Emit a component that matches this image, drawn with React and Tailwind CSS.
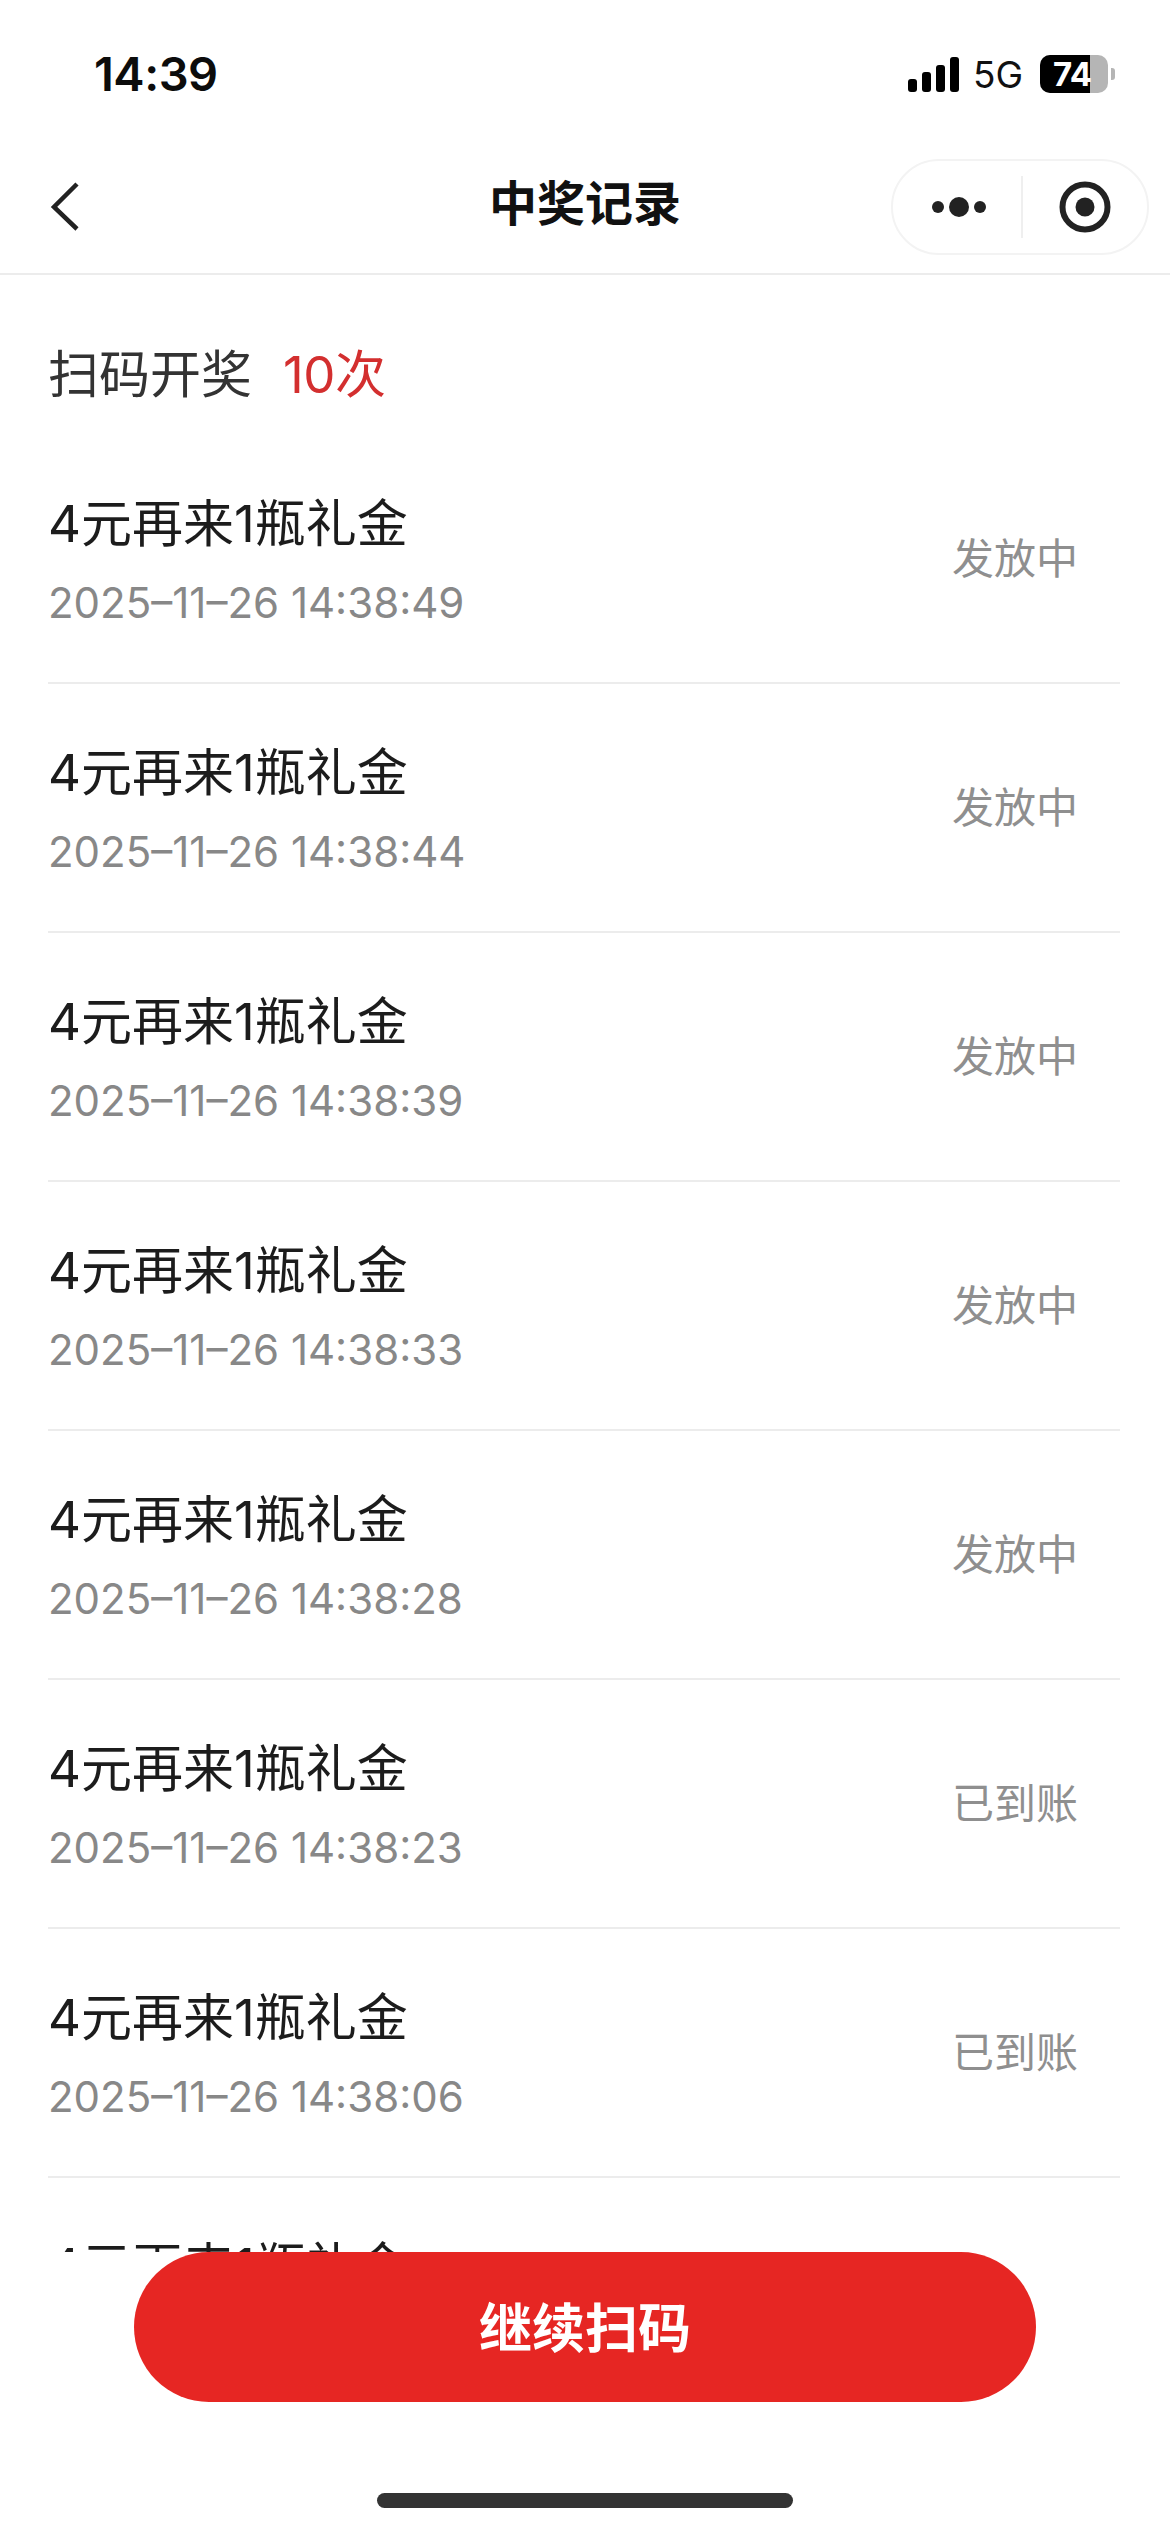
const FONT = { fontFamily: '"Inter","Noto Sans CJK SC",sans-serif' };

const rows = [
  ["2025–11–26 14:38:49", "发放中"],
  ["2025–11–26 14:38:44", "发放中"],
  ["2025–11–26 14:38:39", "发放中"],
  ["2025–11–26 14:38:33", "发放中"],
  ["2025–11–26 14:38:28", "发放中"],
  ["2025–11–26 14:38:23", "已到账"],
  ["2025–11–26 14:38:06", "已到账"],
];

function Signal() {
  return (
    <div className="flex items-end gap-[5px]">
      <div className="h-[13px] w-[9px] rounded-[3px] bg-black" />
      <div className="h-[20px] w-[9px] rounded-[3px] bg-black" />
      <div className="h-[27px] w-[9px] rounded-[3px] bg-black" />
      <div className="h-[35px] w-[9px] rounded-[3px] bg-black" />
    </div>
  );
}

function Battery() {
  return (
    <div className="flex items-center gap-[3px]">
      <div className="relative flex h-[38px] w-[68px] items-center overflow-hidden rounded-[10px] bg-[#b5b5b5]">
        <div className="absolute inset-y-0 left-0 w-[50px] bg-black" />
        <span className="relative ml-[13px] text-[33px] font-bold leading-none tracking-[-0.5px] text-white">74</span>
      </div>
      <div className="h-[12px] w-[4px] rounded-r-[3px] bg-[#b5b5b5]" />
    </div>
  );
}

function Row({ date, status }) {
  return (
    <div className="flex h-[249px] shrink-0 items-center justify-between border-b-2 border-[#ececec]">
      <div className="self-start pt-[54px]">
        <div className="h-[70px] text-[51px] font-normal leading-[70px] text-[#1c1c1c]">4元再来1瓶礼金</div>
        {date && (
          <div className="mt-[14px] h-[60px] text-[42px] font-normal leading-[60px] text-[#888888]">{date}</div>
        )}
      </div>
      {status && <div className="mr-[42px] text-[42px] font-normal leading-none text-[#8f8f8f]">{status}</div>}
    </div>
  );
}

export default function App() {
  return (
    <div className="relative h-[2532px] w-[1170px] overflow-hidden bg-white" style={FONT}>
      <div className="flex h-[130px] items-start justify-between pl-[94px] pr-[55px] pt-[48px]">
        <div className="text-[47px] font-semibold leading-[52px] tracking-[-0.5px] text-[#0c0c0c]">14:39</div>
        <div className="flex h-[52px] items-center">
          <Signal />
          <span className="ml-[14px] text-[37px] leading-none text-[#111111]">5G</span>
          <div className="ml-[17px]"><Battery /></div>
        </div>
      </div>

      <div className="relative flex h-[145px] items-center justify-center border-b-2 border-[#ececec]">
        <svg className="absolute left-[48px] top-[50px]" width="34" height="52" viewBox="0 0 34 52" fill="none">
          <path d="M29 4 L6 27 L29 49" stroke="#222222" strokeWidth="4.5" />
        </svg>
        <div className="pt-[5px] text-[48px] font-bold leading-none text-[#111111]">中奖记录</div>
        <div className="absolute left-[891px] top-[29px] flex h-[96px] w-[258px] items-center rounded-full border-2 border-[#f3f3f3]">
          <div className="flex w-[128px] items-center justify-center gap-[5px] pl-[4px]">
            <div className="h-[12px] w-[12px] rounded-full bg-[#222222]" />
            <div className="h-[20px] w-[20px] rounded-full bg-[#222222]" />
            <div className="h-[12px] w-[12px] rounded-full bg-[#222222]" />
          </div>
          <div className="h-[62px] w-[2px] bg-[#efefef]" />
          <div className="flex flex-1 items-center justify-center">
            <svg width="54" height="54" viewBox="0 0 54 54" fill="none">
              <circle cx="27" cy="27" r="22.5" stroke="#222222" strokeWidth="6" />
              <circle cx="27" cy="27" r="9.5" fill="#222222" />
            </svg>
          </div>
        </div>
      </div>

      <div className="flex h-[160px] items-start pl-[48px] pt-[65px] text-[51px] font-normal leading-[70px]">
        <span className="text-[#333333]">扫码开奖</span>
        <span className="ml-[31px] tracking-[-0.5px] text-[#d32f2f]">10次</span>
      </div>

      <div className="ml-[48px] mr-[50px] flex flex-col">
        {rows.map(([date, status]) => (
          <Row key={date} date={date} status={status} />
        ))}
        <Row />
      </div>

      <div className="absolute inset-x-0 bottom-0 h-[280px] bg-white">
        <div className="mx-[134px] flex h-[150px] items-center justify-center rounded-full bg-[#e62623]">
          <span className="mt-[4px] text-[53px] font-bold leading-none text-white">继续扫码</span>
        </div>
        <div className="mx-auto mt-[91px] h-[15px] w-[416px] rounded-full bg-[#333333]" />
      </div>
    </div>
  );
}
